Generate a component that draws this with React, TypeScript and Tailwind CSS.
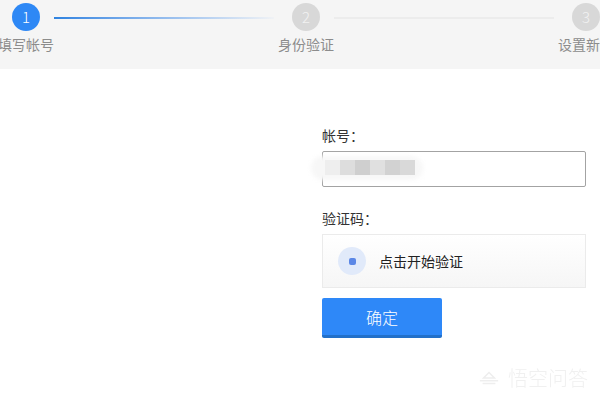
const font = { fontFamily: '"Noto Sans CJK SC", "Noto Sans", sans-serif' };

const Step = ({ num, label, active }: { num: string; label: string; active?: boolean }) => (
  <div className="w-[56px] shrink-0 flex flex-col items-center">
    <div
      className={
        active
          ? "w-[28px] h-[28px] mt-[3px] rounded-full bg-[#2e88f5] text-white text-[15px] font-light flex items-center justify-center"
          : "w-[28px] h-[28px] mt-[3px] rounded-full bg-[#d8d8d8] text-[#f2f2f2] text-[15px] font-light flex items-center justify-center"
      }
    >
      {num}
    </div>
    <div className="mt-[3px] text-[14px] leading-[20px] text-[#8c8c8c] whitespace-nowrap w-[56px]">
      {label}
    </div>
  </div>
);

const App = () => {
  return (
    <div className="w-[600px] h-[400px] bg-white overflow-hidden relative" style={font}>
      {/* STEPS */}
      <div className="h-[69px] bg-[#f5f5f5] flex ml-[-2px]">
        <Step num="1" label="填写帐号" active />
        <div className="w-[220px] h-[2px] mt-[17px] mr-[4px] shrink-0 bg-gradient-to-r from-[#2e83e0] to-[#f0f2f5]"></div>
        <Step num="2" label="身份验证" />
        <div className="w-[220px] h-[2px] mt-[17px] mr-[4px] shrink-0 bg-[#ececec]"></div>
        <Step num="3" label="设置新密码" />
      </div>

      {/* FORM */}
      <div className="w-[264px] ml-[322px] mt-[56px]">
        <div className="text-[14px] leading-[20px] text-[#333]">帐号：</div>
        <div className="relative mt-[6px] h-[36px] border border-[#a3a3a3] rounded-[2px] bg-white">
          <div className="absolute left-[-12px] top-[4px] w-[112px] h-[24px] rounded-full bg-[#f7f7f7] blur-[2px]"></div>
          <div className="absolute left-[2px] top-[8px] h-[15px] flex">
            <div className="w-[15px] bg-[#eeeeee]"></div>
            <div className="w-[15px] bg-[#dddddd]"></div>
            <div className="w-[15px] bg-[#cfcfcf]"></div>
            <div className="w-[15px] bg-[#e0e0e0]"></div>
            <div className="w-[15px] bg-[#d2d2d2]"></div>
            <div className="w-[15px] bg-[#d9d9d9]"></div>
          </div>
        </div>

        <div className="mt-[21px] text-[14px] leading-[20px] text-[#333]">验证码：</div>
        <div className="mt-[6px] h-[54px] border border-[#ebebeb] bg-gradient-to-b from-white to-[#f6f6f6] flex items-center pl-[15px]">
          <div className="w-[28px] h-[28px] rounded-full bg-[#e1eafa] flex items-center justify-center">
            <div className="w-[7px] h-[7px] rounded-[2px] bg-[#5b87e6]"></div>
          </div>
          <div className="ml-[13px] text-[14px] text-[#222]">点击开始验证</div>
        </div>

        <button className="mt-[10px] w-[120px] h-[40px] bg-[#2e88f8] border-b-[3px] border-[#2270c9] rounded-[2px] text-white text-[16px] font-light">
          确定
        </button>
      </div>

      {/* WATERMARK */}
      <div className="absolute left-[478px] top-[366px] flex items-center gap-[8px] text-[#f0f0f0] blur-[0.6px]">
        <svg width="22" height="14" viewBox="0 0 24 14" fill="none" stroke="#eeeeee" strokeWidth="1.6">
          <path d="M12 1 L18 7 H6 Z" />
          <path d="M2 10 H22" />
          <path d="M5 13 H19" />
        </svg>
        <span className="text-[20px] leading-[24px] font-light">悟空问答</span>
      </div>
    </div>
  );
};

export default App;
